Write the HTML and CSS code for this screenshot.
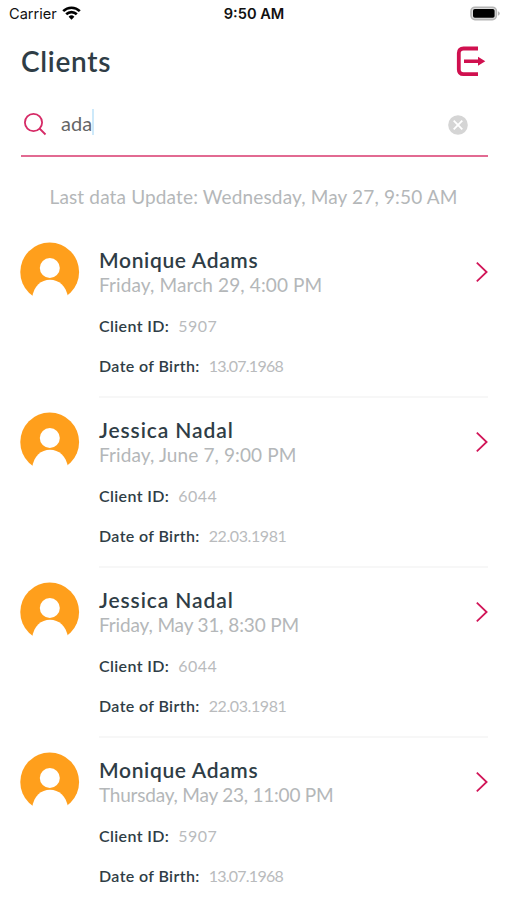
FILE: index.html
```html
<!DOCTYPE html>
<html lang="en">
<head>
    <meta charset="utf-8">
    <title>Clients</title>
    <meta name="viewport" content="width=device-width, initial-scale=1">
    <link rel="stylesheet" href="styles.css">
</head>
<body>
    <svg class="symbols" width="0" height="0">
        <symbol id="avatar" viewBox="0 0 60 60">
            <circle cx="29.7" cy="30" r="29.4" fill="#ff9f1c"/>
            <circle cx="29.8" cy="26" r="10" fill="#fff"/>
            <path d="M12 55.5C14 44 21 37.8 30 37.8S46 44 48.2 55.5V60H12Z" fill="#fff"/>
        </symbol>
        <symbol id="chevron" viewBox="0 0 14 22">
            <path d="M1.8 1.7L11.6 11L1.8 20.3" fill="none" stroke="#d11558" stroke-width="1.8"/>
        </symbol>
    </svg>

    <div class="status-bar">
        <div class="carrier">
            <span class="carrier-name">Carrier</span>
            <svg width="19" height="14" viewBox="0 0 19 14">
                <g fill="none" stroke="#000" stroke-width="2.6">
                    <path d="M1.2 5.2A11.8 11.8 0 0 1 17.8 5.2"/>
                    <path d="M4.2 8.3A7.6 7.6 0 0 1 14.8 8.3"/>
                </g>
                <path d="M6.6 10.7A4.2 4.2 0 0 1 12.4 10.7L9.5 13.7Z"/>
            </svg>
        </div>
        <span class="time">9:50 AM</span>
        <svg class="battery" width="32" height="15" viewBox="0 0 32 15">
            <rect x="2" y="1.2" width="25.4" height="12.4" rx="4" fill="#ddd" stroke="#b5b5b5" stroke-width="1.6"/>
            <rect x="4" y="3" width="21.6" height="8.8" rx="1.8"/>
            <path d="M29 5.2Q30.8 6 30.8 7.5T29 9.8Z" fill="#b5b5b5"/>
        </svg>
    </div>

    <div class="header">
        <h1>Clients</h1>
        <svg class="logout" width="30" height="31" viewBox="0 0 30 31">
            <path d="M22 2.5H7.5Q2.8 2.5 2.8 7V23.5Q2.8 28.2 7.5 28.2H22" fill="none" stroke="#d0104f" stroke-width="3.8"/>
            <path d="M8 13.5H22V10.8L29.3 15.3L22 19.8V17H8Z" fill="#d0104f"/>
        </svg>
    </div>

    <div class="search">
        <svg width="24" height="24" viewBox="0 0 24 24">
            <g fill="none" stroke="#d62a66" stroke-width="1.8">
                <circle cx="9.5" cy="9.5" r="8.6"/>
                <path d="M15.5 15.5L21.5 21.5"/>
            </g>
        </svg>
        <span class="query">ada</span>
        <span class="caret"></span>
        <svg class="clear" width="20" height="20" viewBox="0 0 20 20">
            <circle cx="10" cy="10" r="9.8" fill="#d5d5d5"/>
            <path d="M5.7 5.7L14.3 14.3M14.3 5.7L5.7 14.3" stroke="#fff" stroke-width="1.8"/>
        </svg>
    </div>

    <p class="last-update">Last data Update: Wednesday, May 27, 9:50 AM</p>

    <div class="clients">
        <div class="client">
            <svg class="avatar"><use href="#avatar"/></svg>
            <div class="info">
                <h2>Monique Adams</h2>
                <p class="visit">Friday, March 29, 4:00 PM</p>
                <p class="field"><b>Client ID:</b><span class="id">5907</span></p>
                <p class="field"><b>Date of Birth:</b><span class="date tight">13.07.1968</span></p>
                <svg class="chevron"><use href="#chevron"/></svg>
            </div>
        </div>
        <div class="client">
            <svg class="avatar"><use href="#avatar"/></svg>
            <div class="info">
                <h2 class="wide">Jessica Nadal</h2>
                <p class="visit">Friday, June 7, 9:00 PM</p>
                <p class="field"><b>Client ID:</b><span class="id">6044</span></p>
                <p class="field"><b>Date of Birth:</b><span class="date">22.03.1981</span></p>
                <svg class="chevron"><use href="#chevron"/></svg>
            </div>
        </div>
        <div class="client">
            <svg class="avatar"><use href="#avatar"/></svg>
            <div class="info">
                <h2 class="wide">Jessica Nadal</h2>
                <p class="visit narrow">Friday, May 31, 8:30 PM</p>
                <p class="field"><b>Client ID:</b><span class="id">6044</span></p>
                <p class="field"><b>Date of Birth:</b><span class="date">22.03.1981</span></p>
                <svg class="chevron"><use href="#chevron"/></svg>
            </div>
        </div>
        <div class="client">
            <svg class="avatar"><use href="#avatar"/></svg>
            <div class="info">
                <h2>Monique Adams</h2>
                <p class="visit narrower">Thursday, May 23, 11:00 PM</p>
                <p class="field"><b>Client ID:</b><span class="id">5907</span></p>
                <p class="field"><b>Date of Birth:</b><span class="date tight">13.07.1968</span></p>
                <svg class="chevron"><use href="#chevron"/></svg>
            </div>
        </div>
    </div>
</body>
</html>
```
FILE: styles.css
```css
* {
    box-sizing: border-box;
}
body {
    margin: 0;
    height: 900px;
    overflow: hidden;
    background: #fff;
    color: #2f3d46;
    font-family: Lato, sans-serif;
}
h1, h2, p {
    margin: 0;
}
svg {
    display: block;
    flex: none;
}
.symbols {
    position: absolute;
}

/* iOS status bar */
.status-bar {
    display: grid;
    grid-template-columns: 1fr auto 1fr;
    align-items: center;
    height: 27px;
    padding: 0 6px 0 9px;
    color: #111;
    font-family: Inter, sans-serif;
    font-size: 14.6px;
}
.carrier {
    display: flex;
    gap: 5px;
}
.carrier-name {
    line-height: 16px;
}
.time {
    margin-right: 2px;
    font-weight: 600;
}
.battery {
    justify-self: end;
}

.header {
    display: flex;
    justify-content: space-between;
    align-items: center;
    height: 68px;
    padding: 0 21px;
}
h1 {
    padding-bottom: 1px;
    font-size: 28px;
    font-weight: 600;
    line-height: 34px;
    letter-spacing: 0.7px;
}

.search {
    display: flex;
    align-items: center;
    height: 62px;
    margin: 0 19px 0 21px;
    padding: 0 20px 0 3px;
    border-bottom: 2px solid #e26a92;
}
.query {
    margin-left: 13px;
    padding-bottom: 5px;
    color: #666;
    font-size: 20px;
}
.caret {
    width: 2px;
    height: 26px;
    margin-bottom: 6px;
    background: #cde9fa;
}
.clear {
    margin-left: auto;
}

.last-update {
    height: 71px;
    padding-top: 28px;
    color: #b4b7b9;
    font-size: 19px;
    line-height: 24px;
    letter-spacing: 0.15px;
    text-align: center;
}

.client {
    display: flex;
    gap: 19px;
    height: 170px;
    padding: 0 19px 0 20px;
}
.avatar {
    width: 60px;
    height: 60px;
    margin-top: 14px;
}
.info {
    position: relative;
    flex: 1;
    padding-top: 19px;
    border-bottom: 2px solid #f7f7f7;
}
h2 {
    font-size: 21px;
    font-weight: 600;
    line-height: 26px;
    letter-spacing: 0.65px;
}
.wide {
    letter-spacing: 0.9px;
}
.visit {
    margin-bottom: 17px;
    color: #b4b7b9;
    font-size: 19px;
    line-height: 24px;
    letter-spacing: 0.12px;
}
.narrow {
    letter-spacing: -0.14px;
}
.narrower {
    letter-spacing: -0.22px;
}
.field {
    display: flex;
    gap: 9px;
    height: 40px;
    font-size: 16px;
    line-height: 24px;
}
.field b {
    font-weight: 600;
    letter-spacing: 0.37px;
}
.field span {
    color: #b9bbbd;
}
.id {
    letter-spacing: 0.5px;
}
.date {
    letter-spacing: -0.4px;
}
.tight {
    letter-spacing: -0.75px;
}
.chevron {
    position: absolute;
    top: 33px;
    right: -1px;
    width: 14px;
    height: 22px;
}
```
